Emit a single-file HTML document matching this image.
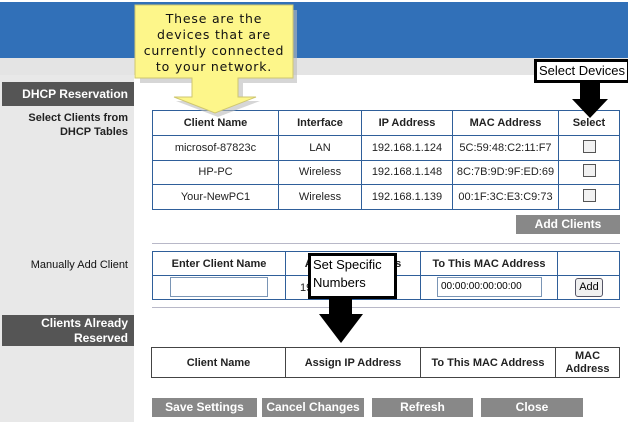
<!DOCTYPE html>
<html><head><style>
*{margin:0;padding:0;box-sizing:border-box}
body{width:628px;height:425px;position:relative;background:#fff;font-family:"Liberation Sans",Arial,sans-serif;overflow:hidden}
.a{position:absolute}
.side{left:0;top:75px;width:134px;height:347px;background:#e8e8e8}
.dark{background:#555;color:#fff;font-weight:bold;font-size:12px;text-align:right;padding-right:6px}
.lbl{font-size:11px;color:#222;text-align:right;width:128px;left:0}
table{border-collapse:collapse;position:absolute;font-size:11px;color:#222}
td{border:1px solid #2f5f9a;text-align:center;padding:0}
.btn{background:#888;color:#fff;font-weight:bold;font-size:12px;text-align:center;line-height:19px;height:19px}
.cb{display:inline-block;width:13px;height:13px;border:1px solid #555;background:#f2f2f2}
.inp{position:absolute;border:1px solid #7a95b5;background:#fff;font-size:10px;padding-left:3px;line-height:18px}
</style></head><body>
<div class="a" style="left:0;top:2px;width:628px;height:56px;background:#3170b8"></div>
<div class="a" style="left:0;top:58px;width:628px;height:17px;background:#e4e4e4"></div>
<div class="a side"></div>
<div class="a dark" style="left:2px;top:82px;width:132px;height:24px;line-height:24px">DHCP Reservation</div>
<div class="a lbl" style="top:111px;line-height:14px;font-weight:bold;font-size:11px">Select Clients from<br>DHCP Tables</div>
<div class="a lbl" style="top:259px;color:#111">Manually Add Client</div>
<div class="a dark" style="left:2px;top:315px;width:132px;height:31px;line-height:15px;padding-top:1px">Clients Already<br>Reserved</div>

<table style="left:152px;top:110px;width:468px;height:100px">
<tr style="height:25px;font-weight:bold"><td style="width:126px">Client Name</td><td style="width:83px">Interface</td><td style="width:91px">IP Address</td><td style="width:106px">MAC Address</td><td>Select</td></tr>
<tr><td>microsof-87823c</td><td>LAN</td><td>192.168.1.124</td><td>5C:59:48:C2:11:F7</td><td><span class="cb"></span></td></tr>
<tr><td>HP-PC</td><td>Wireless</td><td>192.168.1.148</td><td>8C:7B:9D:9F:ED:69</td><td><span class="cb"></span></td></tr>
<tr><td>Your-NewPC1</td><td>Wireless</td><td>192.168.1.139</td><td>00:1F:3C:E3:C9:73</td><td><span class="cb"></span></td></tr>
</table>
<div class="a btn" style="left:516px;top:215px;width:104px">Add Clients</div>
<div class="a" style="left:152px;top:243px;width:468px;height:1px;background:#b8b8c8"></div>

<table style="left:152px;top:251px;width:468px;height:49px">
<tr style="height:24px;font-weight:bold"><td style="width:133px">Enter Client Name</td><td style="width:135px">Assign IP Address</td><td style="width:137px">To This MAC Address</td><td></td></tr>
<tr><td></td><td style="text-align:left;padding-left:14px">192</td><td></td><td></td></tr>
</table>
<div class="inp" style="left:170px;top:277px;width:98px;height:20px"></div>
<div class="inp" style="left:437px;top:277px;width:105px;height:20px">00:00:00:00:00:00</div>
<div class="a" style="left:575px;top:278px;width:28px;height:19px;border:1px solid #556;border-radius:3px;background:#f0f0f0;font-size:11px;text-align:center;line-height:17px">Add</div>
<div class="a" style="left:152px;top:307px;width:468px;height:1px;background:#b8b8c8"></div>

<table style="left:151px;top:347px;width:469px;height:31px;font-weight:bold">
<tr><td style="width:134px;border-color:#444">Client Name</td><td style="width:135px;border-color:#444">Assign IP Address</td><td style="width:135px;border-color:#444">To This MAC Address</td><td style="border-color:#444;line-height:13px">MAC<br>Address</td></tr>
</table>
<div class="a btn" style="left:152px;top:398px;width:105px">Save Settings</div>
<div class="a btn" style="left:262px;top:398px;width:102px">Cancel Changes</div>
<div class="a btn" style="left:372px;top:398px;width:101px">Refresh</div>
<div class="a btn" style="left:481px;top:398px;width:102px">Close</div>

<svg class="a" style="left:130px;top:0" width="170" height="118">
<polygon points="10,10 167,10 167,83 113,83 113,101 130,101 88,117 46,101 65,101 65,83 10,83" fill="#bbb" opacity=".6"/>
<polygon points="5,5 163,5 163,78 108,78 108,97 126,97 85,113 44,97 62,97 62,78 5,78" fill="#fdf68a" stroke="#cfc770" stroke-width="1"/>
</svg>
<div class="a" style="left:133px;top:11px;width:162px;text-align:center;font-family:'DejaVu Sans',sans-serif;font-size:12.5px;line-height:16px;color:#111;letter-spacing:.8px;white-space:nowrap">These are the<br>devices that are<br>currently connected<br>to your network.</div>

<div class="a" style="left:534px;top:59px;width:96px;height:24px;border:3px solid #000;background:#fff;font-size:13px;line-height:17px;padding-left:2px;white-space:nowrap">Select Devices</div>
<svg class="a" style="left:570px;top:82px" width="40" height="40"><polygon points="10,0 30,0 30,17 38,17 20,36 2,17 10,17" fill="#000"/></svg>

<div class="a" style="left:308px;top:253px;width:89px;height:46px;border:3px solid #000;background:#fff;font-size:13px;line-height:18px;padding-left:2px">Set Specific<br>Numbers</div>
<svg class="a" style="left:318px;top:298px" width="48" height="48"><polygon points="11,0 34,0 34,16 45,16 23,45 1,16 11,16" fill="#000"/></svg>
</body></html>
